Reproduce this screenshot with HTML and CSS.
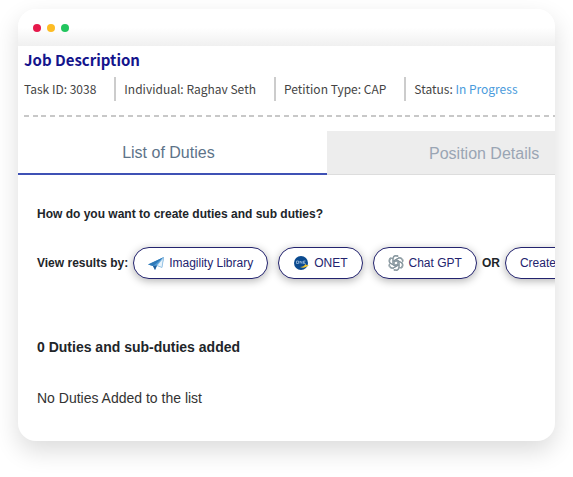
FILE: index.html
```
<!DOCTYPE html>
<html lang="en">
<head>
  <meta charset="UTF-8" />
  <meta name="viewport" content="width=device-width, initial-scale=1.0"/>
  <title>Job Description</title>
  <link rel="stylesheet" href="styles.css">
</head>
<body>
  <div class="window">
    <div class="window-bar">
      <span class="dot red"></span>
      <span class="dot yellow"></span>
      <span class="dot green"></span>
    </div>

    <header class="job-header">
      <h1>Job Description</h1>
      <ul class="job-info">
        <li>Task ID: 3038</li>
        <li>Individual: Raghav Seth</li>
        <li>Petition Type: CAP</li>
        <li>Status: <span class="status">In Progress</span></li>
      </ul>
    </header>

    <div class="tabs" role="tablist">
      <button class="tab active" role="tab" aria-selected="true">List of Duties</button>
      <button class="tab" role="tab" aria-selected="false">Position Details</button>
    </div>

    <main class="content">
      <h2 class="question">How do you want to create duties and sub duties?</h2>
      <div class="sources">
        <span class="label">View results by:</span>
        <button class="pill">
          <svg class="icon" viewBox="0 0 16 16" aria-hidden="true">
            <path d="M0 9.500 L16 2 L14 12.500 L9 10.500 L7 15 L5 11 Z" fill="#4f9bd5"/>
            <path d="M0 9.500 L16 2 L5 11 Z" fill="#2f79b8"/>
            <path d="M15.500 2.500 L9 10.500 L14 12.500 Z" fill="#e8f3fb" stroke="#8fbfe3" stroke-width=".8"/>
            <path d="M5 11 L9 10.500 L7 15 Z" fill="#225f9c"/>
          </svg>
          Imagility Library
        </button>
        <button class="pill">
          <svg class="icon" viewBox="0 0 16 16" aria-hidden="true">
            <circle cx="8" cy="8" r="7" fill="#0b4a8f"/>
            <path d="M3.500 6 h2 v2.500 h-2 Z M7 8.500 V6 l2 2.500 V6 M12.500 6 h-2 v2.500 h2 M10.500 7.200 h1.500" fill="none" stroke="#a9c6e2" stroke-width=".7"/>
            <path d="M7 12 Q11 12 12.500 9 L13.500 10 L16 10.500 L14 11.500 Q11 13.500 7 12 Z" fill="#f3c62f"/>
          </svg>
          ONET
        </button>
        <button class="pill">
          <svg class="icon" viewBox="0 0 24 24" aria-hidden="true">
            <g fill="none" stroke="#84949c" stroke-width="1.500" stroke-linejoin="round">
              <path id="petal" d="M7.500 14.600 V6.200 A4.700 4.700 0 0 1 16 3.600 M9.300 13.600 V8.300 L16.200 4.300 A4.700 4.700 0 0 1 22.500 10"/>
              <use href="#petal" transform="rotate(60 12 12)"/>
              <use href="#petal" transform="rotate(120 12 12)"/>
              <use href="#petal" transform="rotate(180 12 12)"/>
              <use href="#petal" transform="rotate(240 12 12)"/>
              <use href="#petal" transform="rotate(300 12 12)"/>
            </g>
          </svg>
          Chat GPT
        </button>
        <span class="label or">OR</span>
        <button class="pill">Create</button>
      </div>

      <h2 class="count">0 Duties and sub-duties added</h2>
      <p class="empty">No Duties Added to the list</p>
    </main>
  </div>
</body>
</html>
```
FILE: styles.css
```
* {
  box-sizing: border-box;
}
body {
  margin: 0;
  padding: 9px 18px 36px;
  background: white;
  font-family: "Liberation Sans", Arial, sans-serif;
  color: #212529;
}
h1, h2, p, ul {
  margin: 0;
  padding: 0;
}
button {
  font-family: inherit;
  cursor: pointer;
}
.window {
  background: white;
  border-radius: 18px;
  box-shadow: 0 10px 24px rgba(0,0,0,0.14);
  overflow: hidden;
}
.window-bar {
  display: flex;
  align-items: center;
  gap: 6px;
  height: 37px;
  padding-left: 15px;
  background: linear-gradient(white 50%, #f0f0f0);
}
.dot {
  width: 8px;
  height: 8px;
  border-radius: 50%;
}
.red {
  background: #e6194b;
}
.yellow {
  background: #fdbc24;
}
.green {
  background: #22c55e;
}

/* job title and info line */
.job-header {
  margin-left: 6px;
  padding-bottom: 16px;
  font-family: "Noto Sans CJK SC", "Open Sans", sans-serif;
  /* dashed rule under the header */
  background: repeating-linear-gradient(90deg, #c8c8c8 0 5px, transparent 5px 9px, #c8c8c8 9px 14px, transparent 14px 17px, #c8c8c8 17px 22px, transparent 22px 26px) left bottom / 100% 2px no-repeat;
}
.job-header h1 {
  padding-top: 2px;
  font-size: 15px;
  line-height: 24px;
  font-weight: bold;
  color: #14148c;
}
.job-info {
  display: flex;
  list-style: none;
  margin-top: 5px;
  font-size: 12px;
  line-height: 24px;
  white-space: nowrap;
  color: #444;
}
.job-info li + li {
  margin-left: 18px;
  padding-left: 8px;
  border-left: 2px solid #ccc;
}
.status {
  color: #4a9bdc;
}

/* the tabs run past the right edge */
.tabs {
  display: flex;
  width: 115%;
  margin-top: 14px;
}
.tab {
  flex: 0 0 50%;
  height: 44px;
  padding: 2px 0 0 6px;
  border: none;
  border-bottom: 1px solid #ddd;
  background: #ededed;
  font-size: 16px;
  color: #9aa5b4;
}
.tab.active {
  padding: 2px 8px 0 0;
  border-bottom: 2px solid #3f51b5;
  background: white;
  color: #5d7389;
}

.content {
  padding: 31px 0 33px 19px;
}
.question {
  font-size: 12px;
  line-height: 16px;
}
.sources {
  display: flex;
  align-items: center;
  margin-top: 25px;
  white-space: nowrap;
}
.label {
  margin-right: 5px;
  font-size: 12px;
  font-weight: bold;
}
.pill {
  display: flex;
  flex-shrink: 0;
  align-items: center;
  gap: 5px;
  height: 32px;
  margin-right: 10px;
  padding: 0 14px;
  border: 1px solid #23236e;
  border-radius: 16px;
  background: white;
  box-shadow: 0 2px 8px rgba(0,0,0,0.3);
  font-size: 12px;
  color: #23236e;
}
.icon {
  width: 16px;
  height: 16px;
}
.or {
  margin-left: -5px;
}
.count {
  margin-top: 58px;
  font-size: 14px;
  line-height: 20px;
}
.empty {
  margin-top: 31px;
  font-size: 14px;
  line-height: 20px;
  color: #333;
}
```
